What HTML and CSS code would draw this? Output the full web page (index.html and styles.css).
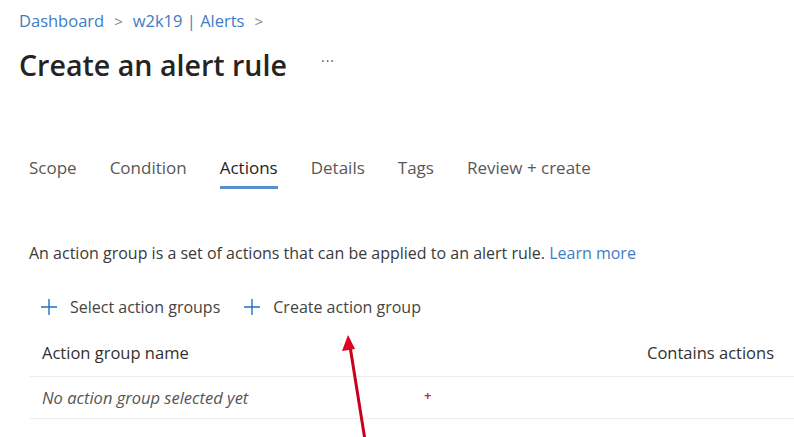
FILE: index.html
```html
<!DOCTYPE html>
<html>
<head>
<meta charset="utf-8">
<link rel="stylesheet" href="styles.css">
</head>
<body>
<div class="page">
  <nav class="crumbs">
    <a class="crumb">Dashboard</a><span class="sep">&gt;</span><a class="crumb">w2k19 | Alerts</a><span class="sep">&gt;</span>
  </nav>
  <div class="titlebar">
    <h1 class="title">Create an alert rule</h1>
    <span class="more">···</span>
  </div>
  <div class="tabs">
    <span class="tab">Scope</span>
    <span class="tab">Condition</span>
    <span class="tab active">Actions</span>
    <span class="tab">Details</span>
    <span class="tab">Tags</span>
    <span class="tab">Review + create</span>
  </div>
  <p class="desc">An action group is a set of actions that can be applied to an alert rule. <a class="link">Learn more</a></p>
  <div class="toolbar">
    <span class="btn"><svg class="plus" viewBox="0 0 18 18" width="18" height="18"><path d="M9 1v16M1 9h16" stroke="#1f6fc5" stroke-width="1.4" fill="none"/></svg>Select action groups</span>
    <span class="btn"><svg class="plus" viewBox="0 0 18 18" width="18" height="18"><path d="M9 1v16M1 9h16" stroke="#1f6fc5" stroke-width="1.4" fill="none"/></svg>Create action group</span>
  </div>
  <div class="table">
    <div class="row head">
      <span class="c1">Action group name</span>
      <span class="c2">Contains actions</span>
    </div>
    <div class="row body">
      <span class="c1 empty">No action group selected yet</span>
    </div>
  </div>
</div>
<span class="cursor">+</span>
<svg class="arrow" width="60" height="110" viewBox="0 0 60 110">
  <path d="M29 10 L45 110" stroke="#c8001e" stroke-width="3" fill="none"/>
  <path d="M28 5 L22 21 L35 19 Z" fill="#e00020"/>
</svg>
</body>
</html>
```
FILE: styles.css
```css
html, body { margin: 0; padding: 0; background: #fff; }
body { font-family: "Open Sans", "Noto Sans", sans-serif; color: #323130; width: 794px; height: 437px; overflow: hidden; position: relative; }
.page { padding: 9px 0 0 19px; }
.crumbs { font-size: 16.5px; line-height: 24px; display: flex; align-items: center; }
.crumb { color: #3f7cc4; }
.sep { color: #8a8886; margin: 0 10px; font-size: 15px; }
.titlebar { display: flex; align-items: center; margin-top: 7px; height: 48px; }
.title { font-size: 28.6px; font-weight: 600; margin: 0; color: #252423; letter-spacing: 0; }
.more { margin-left: 34px; color: #605e5c; font-size: 14px; letter-spacing: 1px; margin-top: -8px; }
.tabs { display: flex; margin: 62px 0 0 10px; font-size: 17px; }
.tab { color: #5a5856; margin-right: 33px; padding: 6px 0 7px; border-bottom: 3px solid transparent; }
.tab.active { color: #252423; border-bottom-color: #5b8fcc; }
.desc { margin: 53px 0 0 10px; font-size: 16px; color: #3b3a39; }
.link { color: #3f7cc4; }
.toolbar { display: flex; margin: 32px 0 0 21px; font-size: 16px; color: #444; }
.btn { display: flex; align-items: center; margin-right: 23px; }
.plus { margin-right: 12px; }
.table { margin: 11px 0 0 11px; }
.row { display: flex; justify-content: space-between; align-items: center; border-bottom: 1px solid #ececec; padding: 0 20px 0 12px; }
.row.head { height: 47px; font-size: 16.5px; color: #323130; }
.row.body { height: 41px; font-size: 16.5px; }
.empty { font-style: italic; color: #555; }
.cursor { position: absolute; left: 424px; top: 386px; color: #c8285a; font-size: 13px; font-weight: 700; }
.arrow { position: absolute; left: 320px; top: 330px; }
```
